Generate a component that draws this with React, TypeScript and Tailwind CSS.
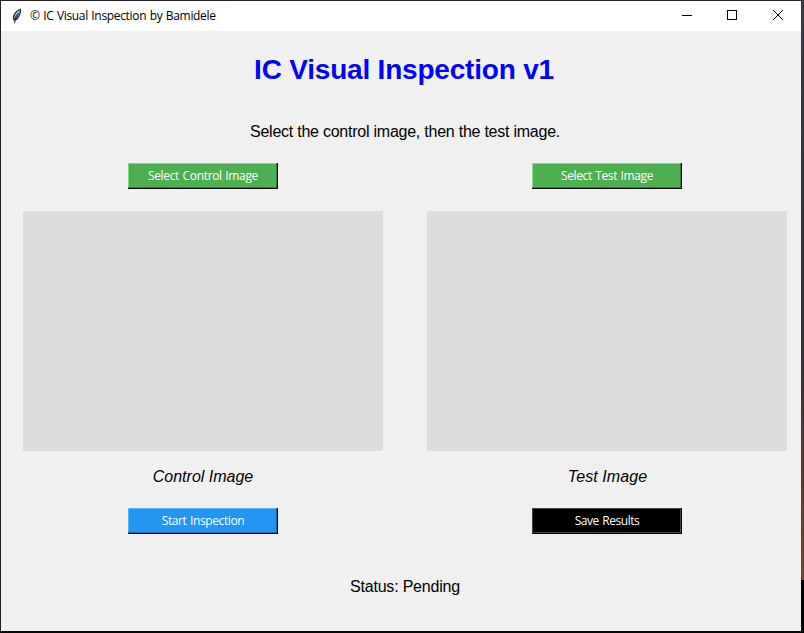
import React from "react";

type ButtonProps = { label: string; tone: string; edge: string; spacing: string };

const ARIAL = "font-['Liberation_Sans',Arial,sans-serif]";
const UI = "font-['Open_Sans','Noto_Sans',sans-serif]";

function TkButton({ label, tone, edge, spacing }: ButtonProps) {
  return (
    <button className={`h-[26px] w-[150px] border-r border-b border-black ${UI}`}>
      <span className={`block h-[25px] border ${edge} ${tone} whitespace-nowrap pl-px text-center text-[12px] leading-[23px] text-white ${spacing}`}>{label}</span>
    </button>
  );
}

type PanelProps = { caption: string; captionSpacing: string; top: ButtonProps; bottom: ButtonProps };

function Panel({ caption, captionSpacing, top, bottom }: PanelProps) {
  return (
    <section className="flex w-[360px] flex-col items-center">
      <TkButton {...top} />
      <div className="mt-[22px] h-[240px] w-full bg-[#dddddd]" />
      <p className={`mt-4 h-5 whitespace-nowrap text-[16px] leading-5 italic text-black ${captionSpacing} ${ARIAL}`}>{caption}</p>
      <div className="mt-[21px] flex">
        <TkButton {...bottom} />
      </div>
    </section>
  );
}

function Feather() {
  return (
    <svg className="ml-[10px] h-4 w-3" viewBox="0 0 12 16">
      <path d="M9.9.4C7.2.8 4.2 3.5 2.8 6.3 1.5 8.7 1.5 10.6 2.8 12.9L5.8 12C8.7 9.3 10.9 3.5 9.9.4Z" fill="#22303f" />
      <path d="M9.3 1.2C6.3 3 2.9 7.1 3 11.4 6.9 10.2 9.4 5 9.3 1.2Z" fill="#5f92c4" />
      <path d="M7.2 5.4 4.6 9.9 3.6 15.3" fill="none" stroke="#111" strokeWidth=".8" />
      <path d="M7.6 2.9 4.2 7.5" stroke="#c3dcf0" strokeWidth="1" />
    </svg>
  );
}

const GREEN = { tone: "bg-[#4caf50]", edge: "border-t-[#7edb82] border-l-[#7edb82] border-r-[#2f7d33] border-b-[#2f7d33]" };

export default function App() {
  return (
    <div className="flex h-[633px] w-[804px] overflow-hidden bg-black">
      <div className="flex h-[633px] w-[801px] flex-col border-t border-b-2 border-l border-t-[#231f24] border-b-[#08080b] border-l-[#231f24] bg-[#f0f0f0]">
        <header className="flex h-[30px] items-center bg-white">
          <Feather />
          <span className={`ml-[7px] whitespace-nowrap text-[12px] leading-4 tracking-[-0.33px] [word-spacing:0.7px] text-black ${UI}`}>© IC Visual Inspection by Bamidele</span>
          <svg className="ml-auto h-[30px] w-[138px]" viewBox="0 0 138 30" fill="none" stroke="#000" shapeRendering="crispEdges">
            <path d="M19 14.5h10" />
            <rect x="64.5" y="9.5" width="9" height="9" />
            <path d="m110 9 10 10m0-10-10 10" shapeRendering="auto" />
          </svg>
        </header>
        <main className="flex flex-1 flex-col items-center pl-2">
          <h1 className={`mt-[23px] h-8 whitespace-nowrap pr-[2px] text-[28px] leading-8 font-bold tracking-[-0.2px] text-[#0000ff] ${ARIAL}`}>IC Visual Inspection v1</h1>
          <p className={`mt-9 h-5 whitespace-nowrap text-[16px] leading-5 tracking-[-0.24px] text-black ${ARIAL}`}>Select the control image, then the test image.</p>
          <div className="mt-[21px] flex w-full gap-11 pl-[14px]">
            <Panel
              caption="Control Image"
              captionSpacing="tracking-normal"
              top={{ label: "Select Control Image", ...GREEN, spacing: "tracking-[-0.33px] [word-spacing:0.7px]" }}
              bottom={{ label: "Start Inspection", tone: "bg-[#2196f3]", edge: "border-t-[#58b8ff] border-l-[#58b8ff] border-r-[#1469ad] border-b-[#1469ad]", spacing: "tracking-[-0.38px] [word-spacing:0.7px]" }}
            />
            <Panel
              caption="Test Image"
              captionSpacing="tracking-[0.08px] pl-px"
              top={{ label: "Select Test Image", ...GREEN, spacing: "tracking-[-0.38px] [word-spacing:0.7px]" }}
              bottom={{ label: "Save Results", tone: "bg-black", edge: "border-[#444444]", spacing: "tracking-[-0.45px] [word-spacing:0.7px]" }}
            />
          </div>
          <p className={`mt-[43px] h-5 whitespace-nowrap text-[16px] leading-5 tracking-[-0.2px] text-black ${ARIAL}`}>Status: Pending</p>
        </main>
      </div>
      <div className="flex w-[3px] flex-col">
        <div className="h-[580px] bg-linear-to-b from-[#3c3a46] via-[#343139] via-60% to-[#7a4128]" />
        <div className="flex-1 bg-black" />
      </div>
    </div>
  );
}
